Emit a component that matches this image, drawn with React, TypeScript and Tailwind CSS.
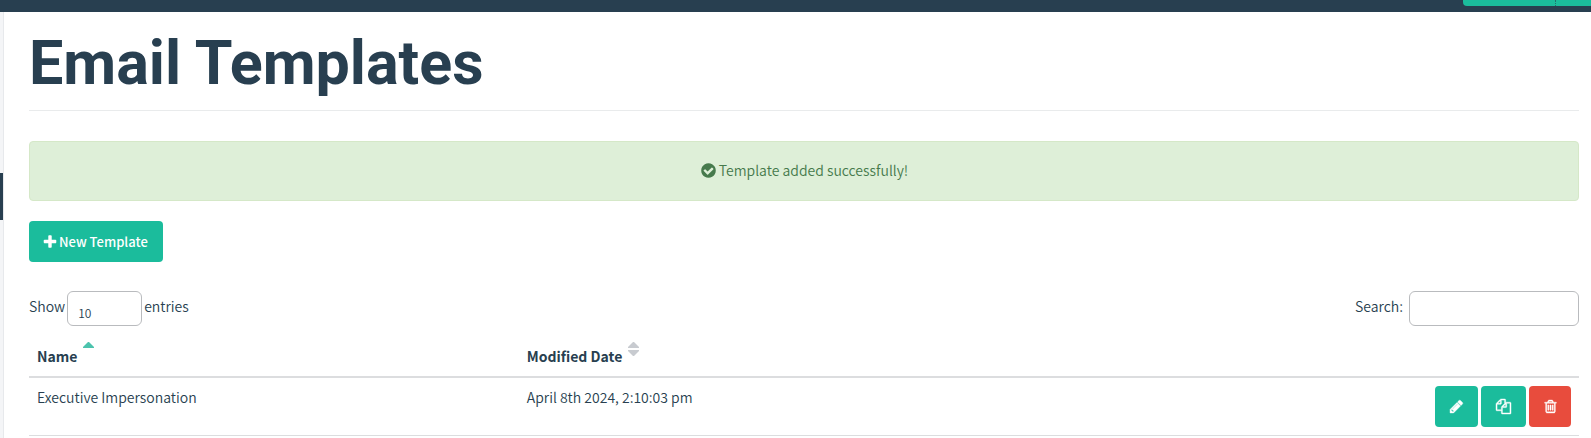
import type { ReactNode } from "react";
import clsx from "clsx";

const icons = {
  plus: "M1600 736v192q0 40-28 68t-68 28h-416v416q0 40-28 68t-68 28h-192q-40 0-68-28t-28-68v-416h-416q-40 0-68-28t-28-68v-192q0-40 28-68t68-28h416v-416q0-40 28-68t68-28h192q40 0 68 28t28 68v416h416q40 0 68 28t28 68z",
  check:
    "M1412 734q0-28-18-46l-91-90q-19-19-45-19t-45 19l-408 407-226-226q-19-19-45-19t-45 19l-91 90q-18 18-18 46 0 27 18 45l362 362q19 19 45 19 27 0 46-19l543-543q18-18 18-45zm252 162q0 209-103 385.5t-279.5 279.5-385.5 103-385.5-103-279.5-279.5-103-385.5 103-385.5 279.5-279.5 385.5-103 385.5 103 279.5 279.5 103 385.5z",
  pencil:
    "M491 1536l91-91-235-235-91 91v107h128v128h107zm523-928q0-22-22-22-10 0-17 7l-542 542q-7 7-7 17 0 22 22 22 10 0 17-7l542-542q7-7 7-17zm-54-192l416 416-832 832h-416v-416zm683 96q0 53-37 90l-166 166-416-416 166-165q36-38 90-38 53 0 91 38l235 234q37 39 37 91z",
  copy: "M1696 384q40 0 68 28t28 68v1216q0 40-28 68t-68 28h-960q-40 0-68-28t-28-68v-288h-544q-40 0-68-28t-28-68v-672q0-40 20-88t48-76l408-408q28-28 76-48t88-20h416q40 0 68 28t28 68v328q68-40 128-40h416zm-544 213l-299 299h299v-299zm-640-384l-299 299h299v-299zm196 647l316-316v-416h-384v416q0 40-28 68t-68 28h-416v640h512v-256q0-40 20-88t48-76zm956 804v-1152h-384v416q0 40-28 68t-68 28h-416v640h896z",
  trash:
    "M704 736v576q0 14-9 23t-23 9h-64q-14 0-23-9t-9-23v-576q0-14 9-23t23-9h64q14 0 23 9t9 23zm256 0v576q0 14-9 23t-23 9h-64q-14 0-23-9t-9-23v-576q0-14 9-23t23-9h64q14 0 23 9t9 23zm256 0v576q0 14-9 23t-23 9h-64q-14 0-23-9t-9-23v-576q0-14 9-23t23-9h64q14 0 23 9t9 23zm128 724v-948h-896v948q0 22 7 40.5t14.5 27 10.5 8.5h832q3 0 10.5-8.5t14.5-27 7-40.5zm-672-1076h448l-48-117q-7-9-17-11h-317q-10 2-17 11zm928 32v64q0 14-9 23t-23 9h-96v948q0 83-47 143.5t-113 60.5h-832q-66 0-113-58.5t-47-141.5v-952h-96q-14 0-23-9t-9-23v-64q0-14 9-23t23-9h309l70-167q15-37 54-63t79-26h320q40 0 79 26t54 63l70 167h309q14 0 23 9t9 23z",
};

function Icon({ name, className }: { name: keyof typeof icons; className?: string }) {
  return (
    <svg
      viewBox="0 0 1792 1792"
      fill="currentColor"
      aria-hidden="true"
      className={clsx("shrink-0 overflow-visible", className ?? "size-[15px]")}
    >
      <path d={icons[name]} />
    </svg>
  );
}

function SortMark({ active }: { active?: boolean }) {
  return (
    <svg
      viewBox="0 0 11 14"
      aria-hidden="true"
      className={clsx("mb-[11px] h-[14px] w-[11px]", active ? "text-[#4cc3ad]" : "text-[#c8cbd0]")}
      fill="currentColor"
    >
      <path d="M5 0h1l5 5v1H0V5z" />
      {!active && <path d="M5 14h1l5-5V8H0v1z" />}
    </svg>
  );
}

function Th({ children, active, className }: { children: ReactNode; active?: boolean; className?: string }) {
  return (
    <th className={clsx("p-0 text-left align-bottom font-bold", className)} aria-sort={active ? "ascending" : "none"}>
      <button type="button" className="flex items-end gap-1.5 px-2 pt-px pb-[9px] leading-[22px]">
        {children}
        <SortMark active={active} />
      </button>
    </th>
  );
}

function RowButton({ icon, label, className }: { icon: keyof typeof icons; label: string; className: string }) {
  return (
    <button
      type="button"
      aria-label={label}
      className={clsx("flex h-[41px] items-center justify-center rounded stroke-current stroke-[50px] text-white", className)}
    >
      <Icon name={icon} />
    </button>
  );
}

const templates = [{ name: "Executive Impersonation", modified: "April 8th 2024, 2:10:03 pm" }];

export default function App() {
  return (
    <div className="flex min-h-screen flex-col bg-white font-['Source_Sans_Pro','Noto_Sans_CJK_JP',sans-serif] text-[14px] leading-[22px] font-[350] text-[#283f50]">
      <header className="flex h-3 items-start justify-end bg-[#283f50]">
        <div className="flex h-1.5 w-32 overflow-hidden rounded-bl bg-[#1bbc9c]">
          <span className="ml-[92px] border-l border-dotted border-[#283f50]/60" />
        </div>
      </header>

      <div className="flex flex-1">
        <aside className="w-1 shrink-0 border-r border-[#e7e9ec] bg-[#f4f5f7] pt-[161px]">
          <div className="h-[47px] bg-[#283f50]" />
        </aside>

        <main className="min-w-0 flex-1 pr-3 pl-[25px]">
          <h1 className="border-b border-[#e9ebec] pt-[18px] pb-[14px] font-['Roboto',sans-serif] text-[61px] leading-[66px] font-bold">
            Email Templates
          </h1>

          <div
            role="status"
            className="mt-[30px] flex h-[60px] items-center justify-center gap-0.5 rounded border border-[#d5e8c8] bg-[#deefd8] pb-0.5 text-[#467a4c]"
          >
            <Icon name="check" className="size-[17px]" />
            <span>Template added successfully!</span>
          </div>

          <button
            type="button"
            className="mt-5 flex h-[41px] items-center gap-px rounded bg-[#1bbc9c] pr-[15px] pl-[13px] text-[13px] font-medium text-white"
          >
            <Icon name="plus" className="size-4" />
            New Template
          </button>

          <div className="mt-[29px] flex items-start justify-between">
            <label className="flex items-center gap-0.5">
              <span className="mb-1.5">Show</span>
              <select className="h-[35px] w-[75px] appearance-none rounded-md border border-[#b9bbbe] bg-white px-2.5 pt-2 text-[12px] leading-4">
                <option>10</option>
                <option>25</option>
                <option>50</option>
              </select>
              <span className="mb-1.5">entries</span>
            </label>
            <label className="flex items-center gap-1.5">
              <span className="mb-1.5">Search:</span>
              <input type="search" className="h-[35px] w-[170px] rounded-md border border-[#b9bbbe] bg-white px-2.5" />
            </label>
          </div>

          <table className="mt-[15px] w-full border-collapse">
            <thead>
              <tr className="border-b-2 border-[#dcdddf]">
                <Th active className="w-[31.6%]">
                  Name
                </Th>
                <Th>Modified Date</Th>
                <td />
              </tr>
            </thead>
            <tbody>
              {templates.map((t) => (
                <tr key={t.name} className="border-b border-[#dcdddf]">
                  <td className="p-2 align-top">{t.name}</td>
                  <td className="p-2 align-top">{t.modified}</td>
                  <td className="p-2">
                    <div className="flex justify-end gap-[3px]">
                      <RowButton icon="pencil" label="Edit Template" className="w-[43px] bg-[#1bbc9c]" />
                      <RowButton icon="copy" label="Copy Template" className="w-[45px] bg-[#1bbc9c]" />
                      <RowButton icon="trash" label="Delete Template" className="w-[42px] bg-[#e84c3d]" />
                    </div>
                  </td>
                </tr>
              ))}
            </tbody>
          </table>
        </main>
      </div>
    </div>
  );
}
